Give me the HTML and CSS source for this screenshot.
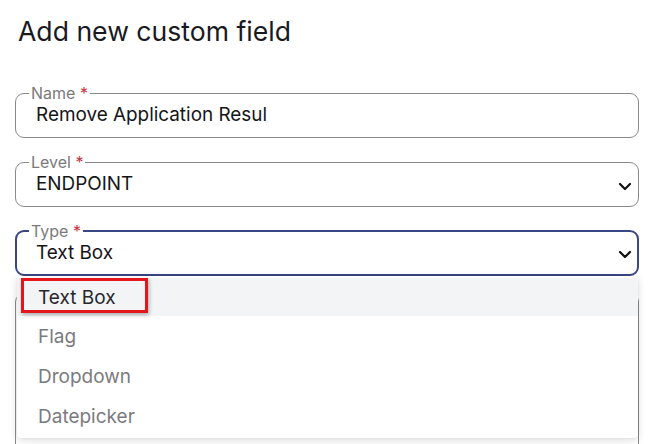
FILE: index.html
```html
<!DOCTYPE html>
<html>
<head>
<meta charset="utf-8">
<link rel="stylesheet" href="styles.css">
</head>
<body>
<div class="page">
  <h1 class="title">Add new custom field</h1>
  <form class="form">
    <fieldset class="field">
      <legend class="label">Name <span class="req">*</span></legend>
      <div class="value">Remove Application Resul</div>
    </fieldset>
    <fieldset class="field">
      <legend class="label">Level <span class="req">*</span></legend>
      <div class="value">ENDPOINT</div>
      <svg class="chev" width="14" height="9" viewBox="0 0 14 9"><path d="M2 2 L7 7 L12 2" fill="none" stroke="#111" stroke-width="2.2" stroke-linecap="round" stroke-linejoin="round"/></svg>
    </fieldset>
    <div class="type-wrap">
      <fieldset class="field focused">
        <legend class="label">Type <span class="req">*</span></legend>
        <div class="value">Text Box</div>
        <svg class="chev" width="14" height="9" viewBox="0 0 14 9"><path d="M2 2 L7 7 L12 2" fill="none" stroke="#111" stroke-width="2.2" stroke-linecap="round" stroke-linejoin="round"/></svg>
      </fieldset>
      <fieldset class="field under"></fieldset>
      <ul class="menu">
        <li class="opt active">Text Box</li>
        <li class="opt">Flag</li>
        <li class="opt">Dropdown</li>
        <li class="opt">Datepicker</li>
      </ul>
      <div class="mark"></div>
    </div>
  </form>
</div>
</body>
</html>
```
FILE: styles.css
```css
* { box-sizing: border-box; }
html, body { margin: 0; padding: 0; background: #fff; }
body { font-family: Inter, "Noto Sans", sans-serif; color: #1b1b1f; overflow: hidden; }
.page { padding: 14px 22px 0 15px; }
.title {
  margin: 0 0 0 3px;
  font-size: 26.6px;
  font-weight: 400;
  line-height: 34px;
  color: #1a1a1e;
}
.form { margin-top: 38px; display: flex; flex-direction: column; gap: 17px; }
.field {
  position: relative;
  margin: 0;
  height: 52px;
  padding: 0 0 0 20px;
  border: 1px solid #8a8a8a;
  border-radius: 9px;
  display: block;
  min-width: 0;
}
.label {
  margin-left: -7px;
  padding: 0 2px;
  font-size: 16px;
  line-height: 14px;
  color: #7a7a7a;
}
.req { color: #c8323c; }
.value {
  font-size: 18.9px;
  line-height: 22px;
  margin-top: 4px;
  color: #151518;
}
.chev { position: absolute; right: 6px; top: 13px; }
.focused { border: 2px solid #3b4684; padding-left: 19px; }
.focused .chev { right: 5px; top: 12px; }
.type-wrap { position: relative; display: flex; flex-direction: column; gap: 17px; }
.under { height: 160px; }
.menu {
  position: absolute;
  left: 2px;
  right: 1px;
  top: 52px;
  height: 162px;
  margin: 0;
  padding: 2px 0 0;
  list-style: none;
  background: #fff;
  border-radius: 4px;
  box-shadow: 0 2px 8px rgba(0,0,0,0.14), 0 0 3px rgba(0,0,0,0.05);
}
.opt {
  height: 40px;
  padding-left: 21px;
  display: flex;
  align-items: center;
  font-size: 19px;
  color: #7b7b7f;
}
.opt.active { background: #f3f4f6; color: #27272b; height: 38px; }
.mark {
  position: absolute;
  left: 6px;
  top: 54px;
  width: 127px;
  height: 35px;
  border: 3px solid #e4161b;
  box-shadow: 1px 2px 4px rgba(0,0,0,0.3);
}
```
